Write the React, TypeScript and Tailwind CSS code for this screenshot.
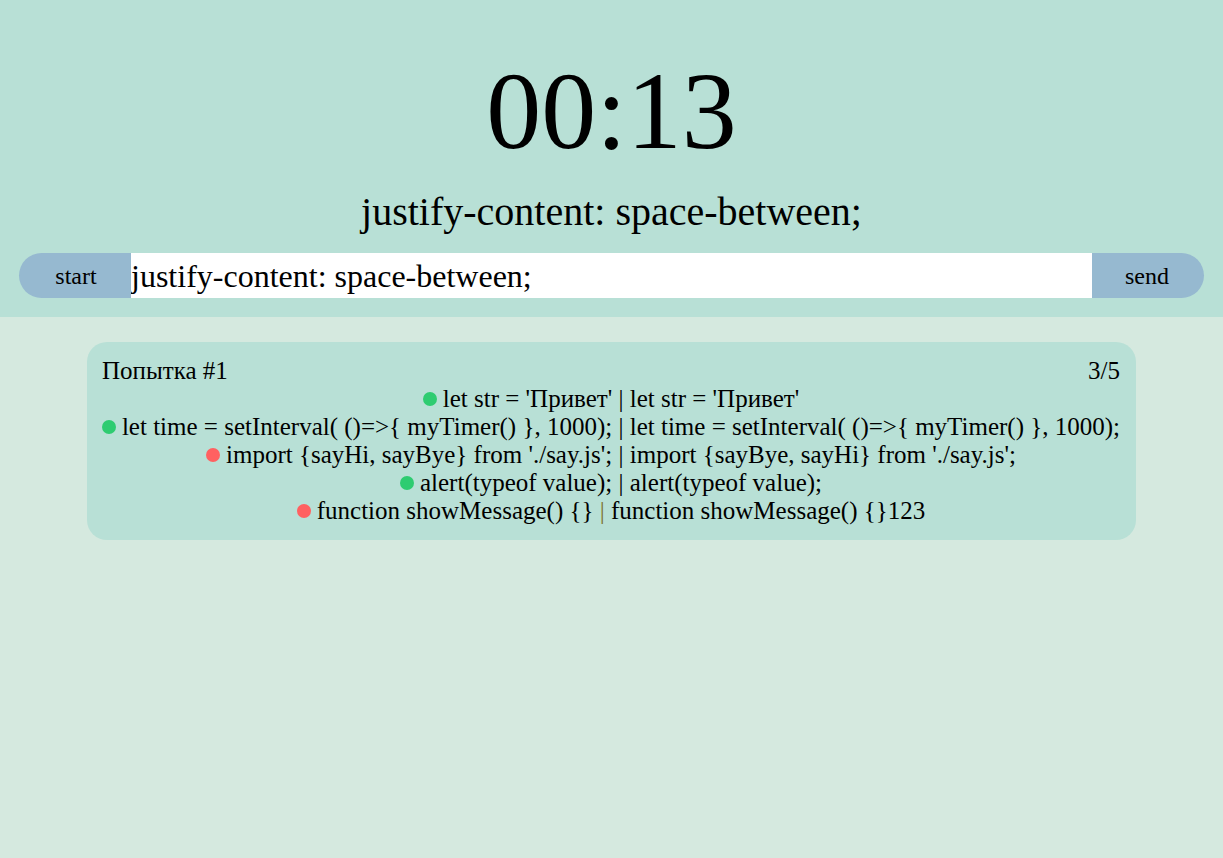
import React, { useState } from "react";

const rows = [
  { ok: true, a: "let str = 'Привет'", b: "let str = 'Привет'" },
  {
    ok: true,
    a: "let time = setInterval( ()=>{ myTimer() }, 1000);",
    b: "let time = setInterval( ()=>{ myTimer() }, 1000);",
  },
  {
    ok: false,
    a: "import {sayHi, sayBye} from './say.js';",
    b: "import {sayBye, sayHi} from './say.js';",
  },
  { ok: true, a: "alert(typeof value);", b: "alert(typeof value);" },
  {
    ok: false,
    a: "function showMessage() {}",
    b: "function showMessage() {}123",
    odd: true,
  },
];

const App = () => {
  const [value, setValue] = useState("justify-content: space-between;");

  return (
    <div className="min-h-[858px] bg-[#d5e9df] text-black font-[family-name:Liberation_Serif]">
      <div className="bg-[#b8e0d6] px-[19px] pt-[48px] pb-[19px] flex flex-col items-center">
        <h1 className="text-[110px] leading-[126px]">00:13</h1>
        <h2 className="text-[40px] leading-[46px] mt-[15px]">
          justify-content: space-between;
        </h2>
        <div className="flex w-full h-[45px] mt-[18px]">
          <button className="w-[112px] bg-[#96b9d0] rounded-l-full text-[24px] pl-[2px]">
            start
          </button>
          <input
            value={value}
            onChange={(e) => setValue(e.target.value)}
            className="flex-1 bg-white outline-none text-[32px] px-0"
          />
          <button className="w-[112px] bg-[#96b9d0] rounded-r-full text-[24px] pr-[2px]">
            send
          </button>
        </div>
      </div>

      <div className="px-[87px] pt-[25px]">
        <div className="bg-[#b8e0d6] rounded-[20px] pl-[15px] pr-[16px] py-[15px] text-[25px] leading-[28px]">
          <div className="flex justify-between">
            <span>Попытка #1</span>
            <span>3/5</span>
          </div>
          {rows.map((row, i) => (
            <div key={i} className="flex justify-center items-center whitespace-nowrap">
              <span
                className={`inline-block w-[14px] h-[14px] rounded-full mr-[6px] ${
                  row.ok ? "bg-[#2ecc71]" : "bg-[#ff6161]"
                }`}
              />
              <span>
                {row.a}{" "}
                <span className={row.odd ? "text-[#7d7130]" : ""}>|</span>{" "}
                {row.b}
              </span>
            </div>
          ))}
        </div>
      </div>
    </div>
  );
};

export default App;
